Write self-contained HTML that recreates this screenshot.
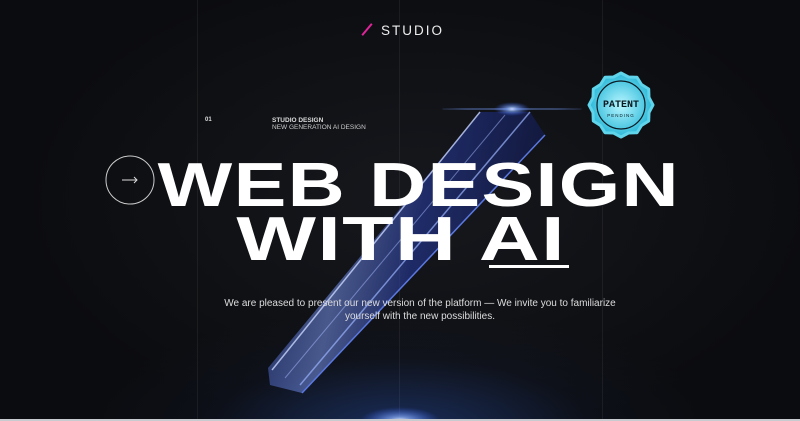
<!DOCTYPE html>
<html><head><meta charset="utf-8"><style>
html,body{margin:0;padding:0}
body{width:800px;height:421px;overflow:hidden;background:#0b0c0f;position:relative;font-family:"Liberation Sans",sans-serif;color:#fff}
.bg{position:absolute;inset:0;background:radial-gradient(ellipse 320px 120px at 400px 430px,rgba(40,80,170,.5),rgba(20,30,60,.2) 60%,transparent 100%),radial-gradient(ellipse 500px 300px at 420px 200px,#16181d,#0b0c0f 80%)}
.vl{position:absolute;top:0;bottom:0;width:1px;background:rgba(255,255,255,.06)}
.logo{position:absolute;top:23px;font-size:13.5px;letter-spacing:2px;color:#eee}
.slash{position:absolute;top:22px;width:2px;height:15px;background:#e0249a;transform:rotate(40deg);transform-origin:center}
.h{position:absolute;width:800px;text-align:center;font-weight:bold;font-size:62px;line-height:62px;white-space:nowrap}
.h span{display:inline-block;letter-spacing:1px}
.small{position:absolute;font-size:6px;color:#ddd}
.p{position:absolute;top:297px;left:0;width:840px;text-align:center;font-size:10px;line-height:13px;color:#ddd}
</style></head><body>
<div class="bg"></div>
<div class="vl" style="left:197px"></div><div class="vl" style="left:399px"></div><div class="vl" style="left:602px"></div>
<svg style="position:absolute;left:0;top:0" width="800" height="421">
<defs>
<linearGradient id="g" x1="0" y1="0" x2="1" y2="0.2"><stop offset="0" stop-color="#1d3088"/><stop offset=".35" stop-color="#6f88d8"/><stop offset=".6" stop-color="#26399a"/><stop offset="1" stop-color="#121c55"/></linearGradient>
<radialGradient id="f"><stop offset="0" stop-color="#fff"/><stop offset=".3" stop-color="#8ab0ff" stop-opacity=".7"/><stop offset="1" stop-color="#3060ff" stop-opacity="0"/></radialGradient>
<radialGradient id="b"><stop offset="0" stop-color="#b8f6ff"/><stop offset="1" stop-color="#2ab8d8"/></radialGradient>
</defs>
<polygon points="480,112 530,112 545,135 302,393 270,385 268,368" fill="url(#g)" opacity=".6"/>
<polyline points="480,112 272,370" stroke="#c8d6ff" stroke-width="1.5" fill="none" opacity=".8"/>
<polyline points="505,115 285,378" stroke="#a8bcff" stroke-width="1" fill="none" opacity=".5"/>
<polyline points="530,112 300,385" stroke="#9bb4ff" stroke-width="1.5" fill="none" opacity=".7"/>
<polyline points="545,135 302,393" stroke="#5a78e0" stroke-width="1.5" fill="none"/>
<ellipse cx="512" cy="109" rx="18" ry="7" fill="url(#f)"/>
<ellipse cx="512" cy="109" rx="70" ry="1" fill="#7aa0ff" opacity=".4"/>
<ellipse cx="400" cy="421" rx="40" ry="14" fill="url(#f)"/>
<polygon points="653,105 649,112.5 648.7,121 641.5,125.5 637,132.7 628.5,133 621,137 613.5,133 605,132.7 600.5,125.5 593.3,121 593,112.5 589,105 593,97.5 593.3,89 600.5,84.5 605,77.3 613.5,77 621,73 628.5,77 637,77.3 641.5,84.5 648.7,89 649,97.5" fill="url(#b)" stroke="#5fd4ea" stroke-width="3" stroke-linejoin="round"/>
<circle cx="621" cy="105" r="24" fill="none" stroke="#0a1a22" stroke-width="1.2"/>
<text x="621" y="107" font-family="Liberation Mono,monospace" font-weight="bold" font-size="10" text-anchor="middle" fill="#0a1a22">PATENT</text>
<text x="621" y="117" font-family="Liberation Sans,sans-serif" font-size="4.5" letter-spacing="1" text-anchor="middle" fill="#0a1a22">PENDING</text>
<circle cx="130" cy="180" r="24" fill="none" stroke="#ccc" stroke-width="1"/>
<path d="M122,180 h15 m-3,-3 l3,3 -3,3" stroke="#ddd" stroke-width="1" fill="none"/>
<rect x="0" y="419" width="800" height="2" fill="#c8cbd0"/>
</svg>
<div class="slash" style="left:366px"></div>
<div class="logo" style="left:381px">STUDIO</div>
<div class="small" style="left:205px;top:117px;font-weight:bold">01</div>
<div class="small" style="left:272px;top:117px;font-weight:bold;font-size:6.5px">STUDIO DESIGN</div>
<div class="small" style="left:272px;top:124px;font-size:6.5px;color:#ccc">NEW GENERATION AI DESIGN</div>
<div class="h" style="top:155px;left:19px"><span style="transform:scaleX(1.275)">WEB DESIGN</span></div>
<div class="h" style="top:209px;left:1px"><span style="transform:scaleX(1.36)">WITH AI</span></div>
<div style="position:absolute;left:489px;top:265px;width:80px;height:3px;background:#fff"></div>
<div class="p">We are pleased to present our new version of the platform — We invite you to familiarize<br>yourself with the new possibilities.</div>
</body></html>
